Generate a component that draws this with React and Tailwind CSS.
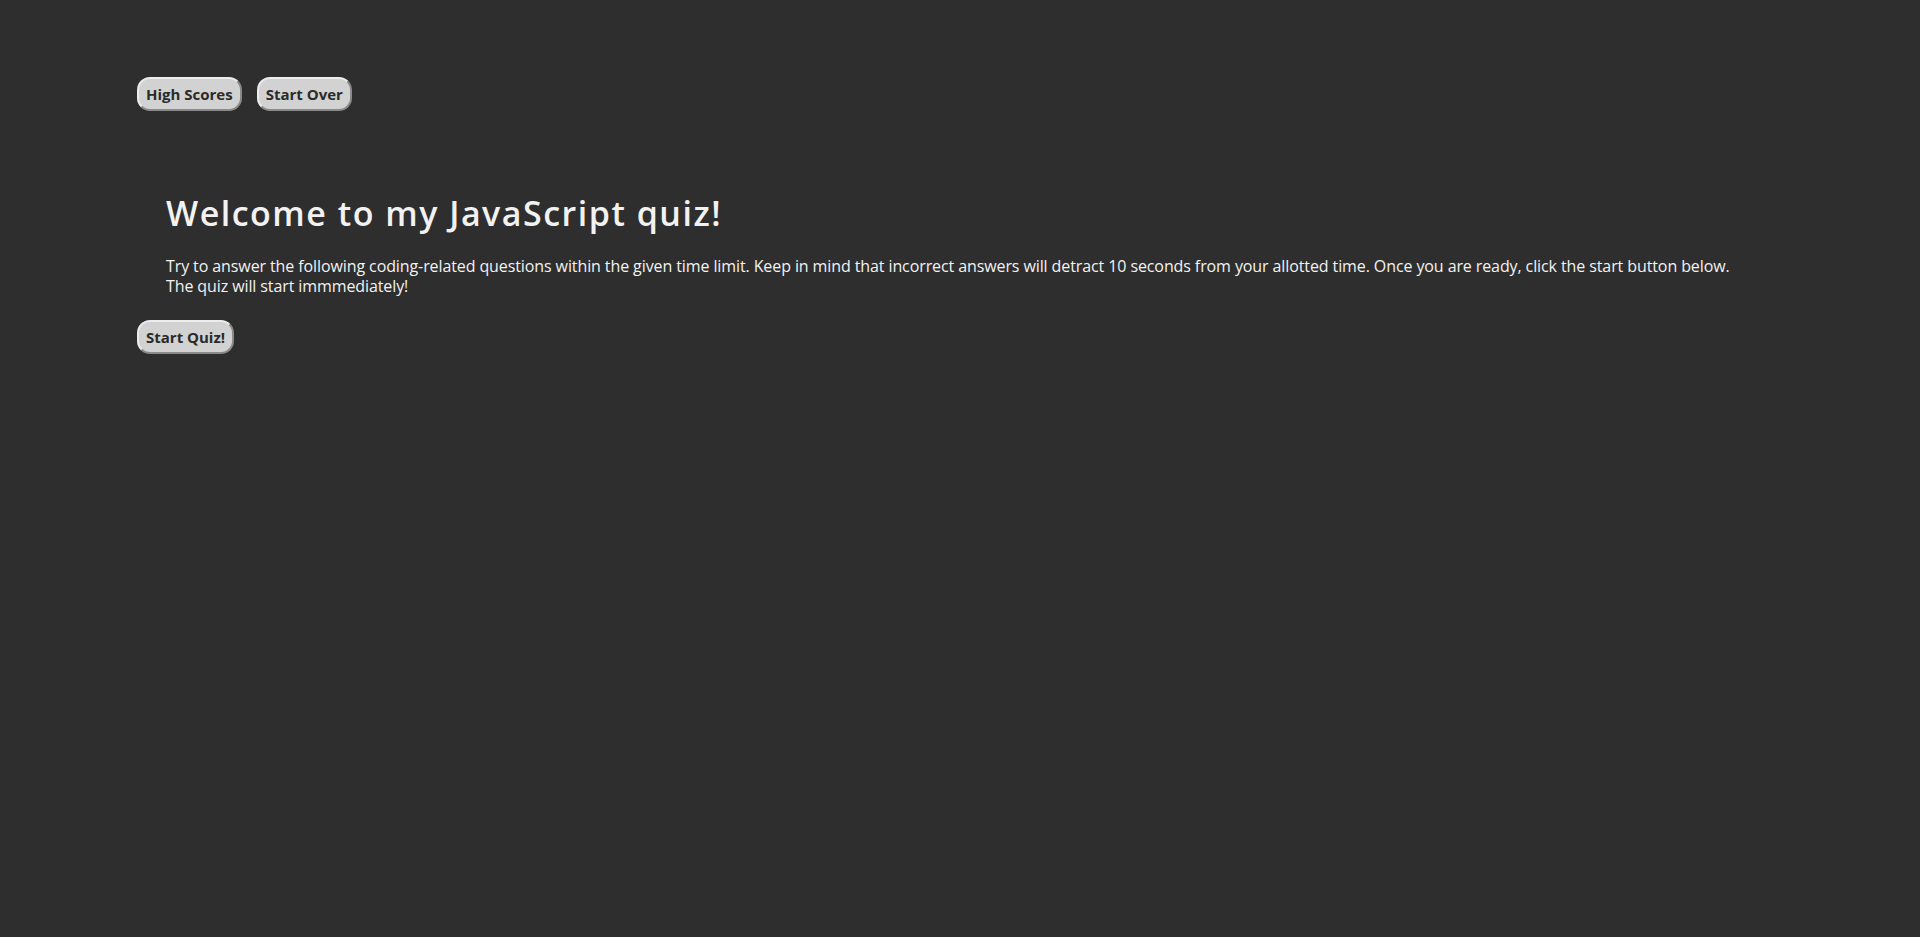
export default function App() {
  const btn =
    "h-[34px] px-[7px] rounded-[13px] bg-[#d2d2d2] text-[#2a2a2a] font-bold text-[15px] border-2 border-solid border-t-[#ececec] border-l-[#ececec] border-b-[#8a8a8a] border-r-[#8a8a8a] leading-none";
  return (
    <div
      className="min-h-[937px] w-full bg-[#2e2e2e] text-[#f2f2f2]"
      style={{ fontFamily: '"Open Sans", "Noto Sans", sans-serif' }}
    >
      <header className="flex gap-[15px] pl-[137px] pt-[77px]">
        <button className={btn}>High Scores</button>
        <button className={btn}>Start Over</button>
      </header>
      <main className="pl-[137px] pt-[82px]">
        <section className="pl-[29px] w-[1613px]">
          <h1 className="text-[34px] font-semibold leading-[40px] tracking-[1.5px]">
            Welcome to my JavaScript quiz!
          </h1>
          <p className="mt-[23px] text-[16px] leading-[20px] tracking-[-0.1px]">
            Try to answer the following coding-related questions within the given time limit. Keep in mind that incorrect answers will detract 10 seconds from your allotted time. Once you are ready, click the start button below. The quiz will start immmediately!
          </p>
        </section>
        <button className={btn + " mt-[24px] px-[6px]"}>Start Quiz!</button>
      </main>
    </div>
  );
}
